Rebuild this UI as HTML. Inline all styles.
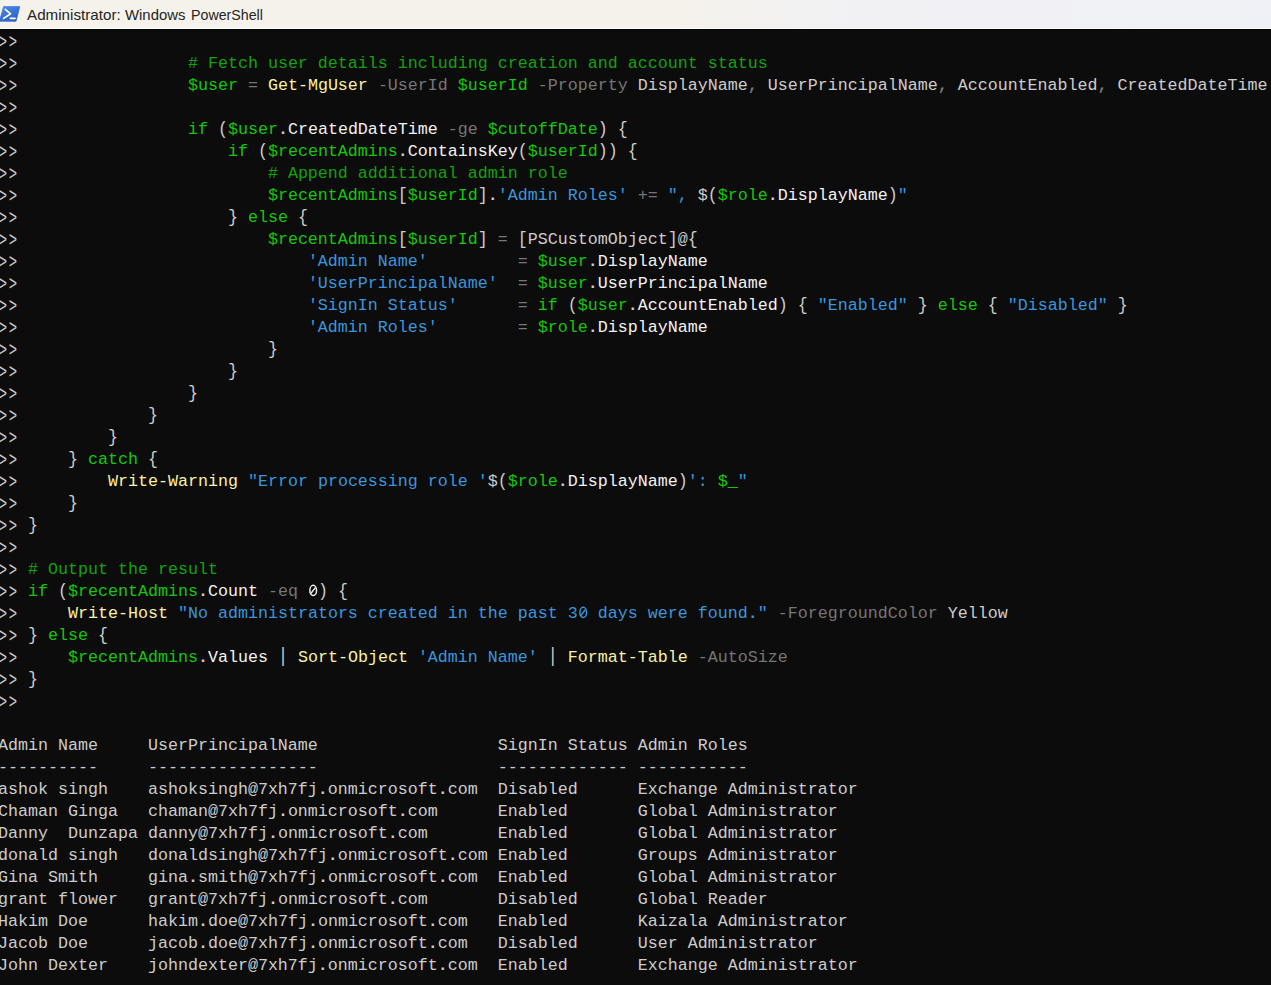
<!DOCTYPE html>
<html><head><meta charset="utf-8"><title>Administrator: Windows PowerShell</title>
<style>
html,body{margin:0;padding:0;}
body{width:1271px;height:985px;overflow:hidden;background:#0c0c0c;position:relative;font-family:"Liberation Mono",monospace;}
#tb{position:absolute;left:0;top:0;width:1271px;height:28px;background:linear-gradient(90deg,#f5f2eb 0px,#f5f2eb 680px,#f1f1f4 850px,#f0f1f6 1271px);border-bottom:1px solid #fdfdfd;box-shadow:0 1px 0 #000;}
#tb .ttl{position:absolute;top:-0.5px;height:29px;line-height:29px;font-family:"Liberation Sans",sans-serif;font-size:15px;color:#242424;white-space:nowrap;transform-origin:0 50%;display:inline-block;}
#tb svg{position:absolute;left:0;top:0;}
#term{position:absolute;left:-2px;top:31px;width:1280px;color:#cccccc;font-family:"Liberation Mono",monospace;font-size:16.664px;line-height:22px;}
.l{height:22px;white-space:pre;}
.c{color:#13a10e}.g{color:#16c60c}.o{color:#767676}.y{color:#f9f1a5}.s{color:#3a96dd}.w{color:#f2f2f2}
b{font-weight:normal;display:inline-block;height:22px;transform-origin:50% 48.4%;transform:translateY(-0.3px) scaleY(1.09);}
i{font-style:normal;display:inline-block;height:22px;transform-origin:50% 43.6%;transform:translateY(1.3px) scale(0.835,1.17);}
.k{color:#767676;font-weight:bold}
s{text-decoration:none;font-weight:bold}
u{text-decoration:none;display:inline-block;height:22px;transform-origin:50% 48.4%;transform:translateY(-0.6px) scaleY(1.19);}
.z{display:inline-block;width:10px;height:22px;vertical-align:top;fill:none;stroke:currentColor;stroke-width:1.45;stroke-linecap:round}

</style></head>
<body>
<div id="tb">
<svg width="24" height="29" viewBox="0 0 24 29"><defs><linearGradient id="pg" x1="0" y1="0" x2="0.6" y2="1"><stop offset="0" stop-color="#4a8bec"/><stop offset="1" stop-color="#2d62c2"/></linearGradient></defs><path d="M3.6 6.6 L19.8 6.6 L16 21.2 L-0.6 21.2 Z" fill="url(#pg)" stroke="url(#pg)" stroke-width="0.8" stroke-linejoin="round"/><path d="M5.3 9.3 L10.6 13.8 L3.6 18.4" stroke="#fff" stroke-width="1.7" fill="none" stroke-linecap="round" stroke-linejoin="round"/><path d="M10.4 18.4 H15" stroke="#fff" stroke-width="1.6" stroke-linecap="round"/></svg>
<span class="ttl" style="left:27px;transform:scaleX(1.013)">Administrator:</span><span class="ttl" style="left:125.4px;transform:scaleX(0.992)">Windows</span><span class="ttl" style="left:190.8px;transform:scaleX(0.948)">PowerShell</span>
</div>

<div id="term">
<div class="l"><i>&gt;</i><i>&gt;</i></div>
<div class="l"><i>&gt;</i><i>&gt;</i>                 <span class="c"># Fetch user details including creation and account status</span></div>
<div class="l"><i>&gt;</i><i>&gt;</i>                 <span class="g">$user</span> <span class="o">=</span> <span class="y">Get-MgUser</span> <span class="o">-UserId</span> <span class="g">$userId</span> <span class="o">-Property</span> DisplayName<span class="k">,</span> UserPrincipalName<span class="k">,</span> AccountEnabled<span class="k">,</span> CreatedDateTime</div>
<div class="l"><i>&gt;</i><i>&gt;</i></div>
<div class="l"><i>&gt;</i><i>&gt;</i>                 <span class="g">if</span> <b>(</b><span class="g">$user</span><s>.</s><span class="w">CreatedDateTime</span> <span class="o">-ge</span> <span class="g">$cutoffDate</span><b>)</b> <b>{</b></div>
<div class="l"><i>&gt;</i><i>&gt;</i>                     <span class="g">if</span> <b>(</b><span class="g">$recentAdmins</span><s>.</s><span class="w">ContainsKey</span><b>(</b><span class="g">$userId</span><b>)</b><b>)</b> <b>{</b></div>
<div class="l"><i>&gt;</i><i>&gt;</i>                         <span class="c"># Append additional admin role</span></div>
<div class="l"><i>&gt;</i><i>&gt;</i>                         <span class="g">$recentAdmins</span><b>[</b><span class="g">$userId</span><b>]</b><s>.</s><span class="s">'Admin Roles'</span> <span class="o">+=</span> <span class="s">", </span>$<b>(</b><span class="g">$role</span><s>.</s><span class="w">DisplayName</span><b>)</b><span class="s">"</span></div>
<div class="l"><i>&gt;</i><i>&gt;</i>                     <b>}</b> <span class="g">else</span> <b>{</b></div>
<div class="l"><i>&gt;</i><i>&gt;</i>                         <span class="g">$recentAdmins</span><b>[</b><span class="g">$userId</span><b>]</b> <span class="o">=</span> <b>[</b>PSCustomObject<b>]</b>@<b>{</b></div>
<div class="l"><i>&gt;</i><i>&gt;</i>                             <span class="s">'Admin Name'</span>         <span class="o">=</span> <span class="g">$user</span><s>.</s><span class="w">DisplayName</span></div>
<div class="l"><i>&gt;</i><i>&gt;</i>                             <span class="s">'UserPrincipalName'</span>  <span class="o">=</span> <span class="g">$user</span><s>.</s><span class="w">UserPrincipalName</span></div>
<div class="l"><i>&gt;</i><i>&gt;</i>                             <span class="s">'SignIn Status'</span>      <span class="o">=</span> <span class="g">if</span> <b>(</b><span class="g">$user</span><s>.</s><span class="w">AccountEnabled</span><b>)</b> <b>{</b> <span class="s">"Enabled"</span> <b>}</b> <span class="g">else</span> <b>{</b> <span class="s">"Disabled"</span> <b>}</b></div>
<div class="l"><i>&gt;</i><i>&gt;</i>                             <span class="s">'Admin Roles'</span>        <span class="o">=</span> <span class="g">$role</span><s>.</s><span class="w">DisplayName</span></div>
<div class="l"><i>&gt;</i><i>&gt;</i>                         <b>}</b></div>
<div class="l"><i>&gt;</i><i>&gt;</i>                     <b>}</b></div>
<div class="l"><i>&gt;</i><i>&gt;</i>                 <b>}</b></div>
<div class="l"><i>&gt;</i><i>&gt;</i>             <b>}</b></div>
<div class="l"><i>&gt;</i><i>&gt;</i>         <b>}</b></div>
<div class="l"><i>&gt;</i><i>&gt;</i>     <b>}</b> <span class="g">catch</span> <b>{</b></div>
<div class="l"><i>&gt;</i><i>&gt;</i>         <span class="y">Write-Warning</span> <span class="s">"Error processing role '</span>$<b>(</b><span class="g">$role</span><s>.</s><span class="w">DisplayName</span><b>)</b><span class="s">': </span><span class="g">$_</span><span class="s">"</span></div>
<div class="l"><i>&gt;</i><i>&gt;</i>     <b>}</b></div>
<div class="l"><i>&gt;</i><i>&gt;</i> <b>}</b></div>
<div class="l"><i>&gt;</i><i>&gt;</i></div>
<div class="l"><i>&gt;</i><i>&gt;</i> <span class="c"># Output the result</span></div>
<div class="l"><i>&gt;</i><i>&gt;</i> <span class="g">if</span> <b>(</b><span class="g">$recentAdmins</span><s>.</s><span class="w">Count</span> <span class="o">-eq</span> <span class="w"><svg class="z" viewBox="0 0 10 22"><ellipse cx="5.2" cy="9.4" rx="3.35" ry="5.1"/><path d="M3.2 12 L7.2 6.9"/></svg></span><b>)</b> <b>{</b></div>
<div class="l"><i>&gt;</i><i>&gt;</i>     <span class="y">Write-Host</span> <span class="s">"No administrators created in the past 3<svg class="z" viewBox="0 0 10 22"><ellipse cx="5.2" cy="9.4" rx="3.35" ry="5.1"/><path d="M3.2 12 L7.2 6.9"/></svg> days were found<s>.</s>"</span> <span class="o">-ForegroundColor</span> Yellow</div>
<div class="l"><i>&gt;</i><i>&gt;</i> <b>}</b> <span class="g">else</span> <b>{</b></div>
<div class="l"><i>&gt;</i><i>&gt;</i>     <span class="g">$recentAdmins</span><s>.</s><span class="w">Values</span> <u>|</u> <span class="y">Sort-Object</span> <span class="s">'Admin Name'</span> <u>|</u> <span class="y">Format-Table</span> <span class="o">-AutoSize</span></div>
<div class="l"><i>&gt;</i><i>&gt;</i> <b>}</b></div>
<div class="l"><i>&gt;</i><i>&gt;</i></div>
<div class="l">&nbsp;</div>
<div class="l">Admin Name     UserPrincipalName                  SignIn Status Admin Roles</div>
<div class="l">----------     -----------------                  ------------- -----------</div>
<div class="l">ashok singh    ashoksingh@7xh7fj<s>.</s>onmicrosoft<s>.</s>com  Disabled      Exchange Administrator</div>
<div class="l">Chaman Ginga   chaman@7xh7fj<s>.</s>onmicrosoft<s>.</s>com      Enabled       Global Administrator</div>
<div class="l">Danny  Dunzapa danny@7xh7fj<s>.</s>onmicrosoft<s>.</s>com       Enabled       Global Administrator</div>
<div class="l">donald singh   donaldsingh@7xh7fj<s>.</s>onmicrosoft<s>.</s>com Enabled       Groups Administrator</div>
<div class="l">Gina Smith     gina<s>.</s>smith@7xh7fj<s>.</s>onmicrosoft<s>.</s>com  Enabled       Global Administrator</div>
<div class="l">grant flower   grant@7xh7fj<s>.</s>onmicrosoft<s>.</s>com       Disabled      Global Reader</div>
<div class="l">Hakim Doe      hakim<s>.</s>doe@7xh7fj<s>.</s>onmicrosoft<s>.</s>com   Enabled       Kaizala Administrator</div>
<div class="l">Jacob Doe      jacob<s>.</s>doe@7xh7fj<s>.</s>onmicrosoft<s>.</s>com   Disabled      User Administrator</div>
<div class="l">John Dexter    johndexter@7xh7fj<s>.</s>onmicrosoft<s>.</s>com  Enabled       Exchange Administrator</div>
</div>
</body></html>
